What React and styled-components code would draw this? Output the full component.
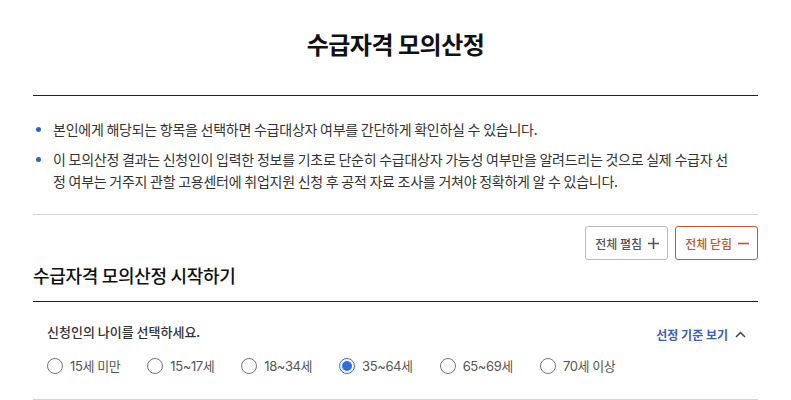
import React, { useState } from "react"
import styled, { createGlobalStyle } from "styled-components"

const GlobalStyle = createGlobalStyle`
  body {
    margin: 0;
    background: #fff;
    font-family: "Noto Sans CJK KR", "Noto Sans", sans-serif;
    color: #222;
  }
`

const Page = styled.div`
  width: 725px;
  margin: 0 auto;
  padding-top: 26px;
`

const Title = styled.h1`
  margin: 0;
  text-align: center;
  font-size: 24px;
  font-weight: 700;
  line-height: 36px;
  letter-spacing: -0.5px;
  color: #111;
`

const Notice = styled.ul`
  margin: 33px 0 0;
  padding: 22px 0 22px;
  border-top: 1px solid #222;
  border-bottom: 1px solid #d5d5d5;
  list-style: none;
`

const NoticeItem = styled.li`
  position: relative;
  padding-left: 20px;
  padding-right: 20px;
  font-size: 14px;
  line-height: 22px;
  color: #333;
  letter-spacing: -0.25px;
  word-break: break-all;

  & + & {
    margin-top: 8px;
  }

  &::before {
    content: "";
    position: absolute;
    left: 3px;
    top: 9px;
    width: 5px;
    height: 5px;
    border-radius: 50%;
    background: #2f63c8;
  }
`

const Toolbar = styled.div`
  display: flex;
  justify-content: flex-end;
  gap: 7px;
  margin-top: 11px;
`

const ToggleButton = styled.button`
  display: flex;
  align-items: center;
  gap: 6px;
  height: 34px;
  padding: 0 8px 0 9px;
  background: #fff;
  border: 1px solid ${({ $active }) => ($active ? "#c1592a" : "#bbb")};
  border-radius: 3px;
  font-family: inherit;
  font-size: 12px;
  font-weight: 500;
  color: ${({ $active }) => ($active ? "#c1592a" : "#555")};
`

const SectionTitle = styled.h2`
  margin: 2px 0 0;
  padding-bottom: 13px;
  border-bottom: 1px solid #222;
  font-size: 18px;
  font-weight: 500;
  line-height: 26px;
  color: #111;
  letter-spacing: -0.3px;
`

const Question = styled.div`
  padding: 18px 12px 24px 14px;
  border-bottom: 1px solid #d5d5d5;
`

const QuestionHead = styled.div`
  display: flex;
  justify-content: space-between;
  align-items: center;
`

const QuestionLabel = styled.span`
  font-size: 13px;
  font-weight: 500;
  color: #333;
`

const CriteriaLink = styled.a`
  display: flex;
  align-items: center;
  gap: 7px;
  margin-top: 6px;
  font-size: 12px;
  font-weight: 700;
  color: #3d5cc0;
  text-decoration: none;
`

const Options = styled.div`
  display: flex;
  gap: 27px;
  margin-top: 13px;
`

const Option = styled.label`
  display: flex;
  align-items: center;
  gap: 7px;
  font-family: "Inter", "Noto Sans CJK KR", sans-serif;
  font-size: 13px;
  letter-spacing: -0.4px;
  color: #555;
`

const Radio = styled.span`
  box-sizing: border-box;
  width: 16px;
  height: 16px;
  border-radius: 50%;
  border: 1px solid ${({ $checked }) => ($checked ? "#2f6fe0" : "#777")};
  display: flex;
  align-items: center;
  justify-content: center;

  &::after {
    content: "";
    width: 10px;
    height: 10px;
    border-radius: 50%;
    background: ${({ $checked }) => ($checked ? "#2f6fe0" : "transparent")};
  }
`

const Plus = () => (
  <svg width="11" height="11" viewBox="0 0 11 11">
    <path d="M5.5 0v11M0 5.5h11" stroke="#555" strokeWidth="1.6" />
  </svg>
)

const Minus = () => (
  <svg width="11" height="11" viewBox="0 0 11 11">
    <path d="M0 5.5h11" stroke="#c1592a" strokeWidth="1.6" />
  </svg>
)

const ChevronUp = () => (
  <svg width="11" height="7" viewBox="0 0 11 7">
    <path d="M1 6l4.5-4.5L10 6" fill="none" stroke="#444" strokeWidth="1.5" />
  </svg>
)

const ages = ["15세 미만", "15~17세", "18~34세", "35~64세", "65~69세", "70세 이상"]

export default function App() {
  const [age, setAge] = useState("35~64세")

  return (
    <Page>
      <GlobalStyle />
      <Title>수급자격 모의산정</Title>
      <Notice>
        <NoticeItem>
          본인에게 해당되는 항목을 선택하면 수급대상자 여부를 간단하게 확인하실 수 있습니다.
        </NoticeItem>
        <NoticeItem>
          이 모의산정 결과는 신청인이 입력한 정보를 기초로 단순히 수급대상자 가능성 여부만을 알려드리는 것으로 실제 수급자 선정 여부는 거주지 관할 고용센터에 취업지원 신청 후 공적 자료 조사를 거쳐야 정확하게 알 수 있습니다.
        </NoticeItem>
      </Notice>
      <Toolbar>
        <ToggleButton>
          전체 펼침 <Plus />
        </ToggleButton>
        <ToggleButton $active>
          전체 닫힘 <Minus />
        </ToggleButton>
      </Toolbar>
      <SectionTitle>수급자격 모의산정 시작하기</SectionTitle>
      <Question>
        <QuestionHead>
          <QuestionLabel>신청인의 나이를 선택하세요.</QuestionLabel>
          <CriteriaLink href="#">
            선정 기준 보기 <ChevronUp />
          </CriteriaLink>
        </QuestionHead>
        <Options>
          {ages.map((a) => (
            <Option key={a} onClick={() => setAge(a)}>
              <Radio $checked={age === a} />
              {a}
            </Option>
          ))}
        </Options>
      </Question>
    </Page>
  )
}
